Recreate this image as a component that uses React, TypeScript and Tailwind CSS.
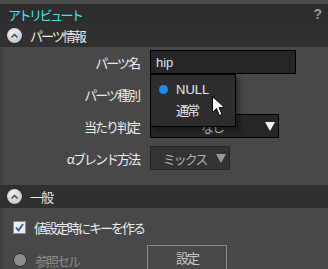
import React from 'react'

const font = "font-['Noto_Sans_CJK_JP','Noto_Sans',sans-serif]"

function CollapseIcon() {
  return (
    <span className="w-[15px] h-[15px] rounded-full bg-[radial-gradient(circle_at_40%_35%,#f4f4f4,#c9c9c9_70%,#a8a8a8)] flex items-center justify-center shadow-[0_0_1px_#000]">
      <svg width="9" height="6" viewBox="0 0 9 6">
        <path d="M1.5 4.5 L4.5 1.5 L7.5 4.5" fill="none" stroke="#245a8c" strokeWidth="1.6" />
      </svg>
    </span>
  )
}

function SectionHeader({ title }: { title: string }) {
  return (
    <div className="h-[23px] bg-[#303030] flex items-center pl-[7px] gap-[8px]">
      <CollapseIcon />
      <span className="text-[#ececec] tracking-[-2px]">{title}</span>
    </div>
  )
}

function Label({ text }: { text: string }) {
  return <div className="w-[138px] text-right text-[#ececec] tracking-[-2px] pr-[2px]">{text}</div>
}

function Triangle({ color }: { color: string }) {
  return (
    <svg width="10" height="9" viewBox="0 0 10 9">
      <path d="M0 0 L10 0 L5 9 Z" fill={color} />
    </svg>
  )
}

export default function App() {
  return (
    <div className={`w-[328px] h-[269px] overflow-hidden bg-[#484848] text-[13px] leading-none ${font}`}>
      <div className="h-[4px] bg-[#4b4b4b]" />
      <div className="h-[20px] bg-[#2d2d2d] flex items-center justify-between pl-[8px] pr-[6px]">
        <span className="text-[#45e6ef] tracking-[-2.5px] text-[13px]">アトリビュート</span>
        <span className="text-[#9a9a9a] font-bold text-[14px] font-['Liberation_Sans']">?</span>
      </div>

      <SectionHeader title="パーツ情報" />

      <div className="border-l-[3px] border-[#3e3e3e] pt-[3px] pb-[15px] flex flex-col gap-[8px]">
        <div className="flex items-center gap-[9px] relative">
          <Label text="パーツ名" />
          <div className="w-[146px] h-[24px] bg-[#262626] border border-black flex items-center pl-[5px] text-[#dce6f0] font-['Liberation_Sans'] text-[13px] relative">
            hip
            <div className="absolute left-[-1px] top-[23px] w-[86px] h-[53px] bg-[#2d2d2d] border border-black shadow-[4px_4px_4px_rgba(0,0,0,0.35)] z-10 flex flex-col pt-[8px] gap-[8px]">
              <div className="flex items-center h-[12px]">
                <span className="w-[9px] h-[9px] rounded-full bg-[#1a8ef0] ml-[8px] mr-[8px]" />
                <span className="text-[#e0e8f0] font-['Liberation_Sans'] text-[13px]">NULL</span>
              </div>
              <div className="flex items-center h-[12px] pl-[25px]">
                <span className={`text-[#e6e6e6] text-[13px] tracking-[-2px] ${font}`}>通常</span>
              </div>
            </div>
            <svg className="absolute left-[61px] top-[45px] z-20" width="13" height="21" viewBox="0 0 13 21">
              <path d="M0.5 0.5 L0.5 16.5 L4.5 12.5 L7.5 19.5 L10 18.5 L7 11.5 L12.5 11.5 Z" fill="#fff" stroke="#000" strokeWidth="1" />
            </svg>
          </div>
        </div>

        <div className="flex items-center gap-[9px] h-[24px]">
          <Label text="パーツ種別" />
          <div className="w-[84px] h-[24px] bg-[#262626] border border-black" />
        </div>

        <div className="flex items-center gap-[9px]">
          <Label text="当たり判定" />
          <div className="w-[129px] h-[24px] bg-[#262626] border border-black flex items-center pr-[3px]">
            <span className="flex-1 text-center text-[#b8c0c8] tracking-[-2px] pl-[8px]">なし</span>
            <Triangle color="#f2f2f2" />
          </div>
        </div>

        <div className="flex items-center gap-[9px]">
          <Label text="αブレンド方法" />
          <div className="w-[80px] h-[24px] bg-[#333333] border border-[#262626] flex items-center pr-[3px]">
            <span className="flex-1 text-center text-[#a9b4bf] tracking-[-2px] pl-[2px]">ミックス</span>
            <Triangle color="#9a9a9a" />
          </div>
        </div>
      </div>

      <SectionHeader title="一般" />

      <div className="border-l-[3px] border-[#3e3e3e] pl-[10px] pt-[12px] flex flex-col">
        <div className="flex items-center gap-[8px] h-[14px]">
          <span className="w-[13px] h-[13px] bg-[#eeeeee] border border-[#8a8a8a] flex items-center justify-center">
            <svg width="9" height="9" viewBox="0 0 9 9">
              <path d="M1 4.5 L3.5 7.5 L8 1" fill="none" stroke="#2b5cb4" strokeWidth="1.8" />
            </svg>
          </span>
          <span className="text-[#ececec] tracking-[-2px]">値設定時にキーを作る</span>
        </div>
        <div className="flex items-center mt-[11px] h-[24px]">
          <div className="w-[134px] flex items-center mt-[6px]">
            <span className="w-[14px] h-[14px] rounded-full bg-[#8c8c8c] border border-[#2a2a2a]" />
            <span className="text-[#8c8c8c] tracking-[-2px] ml-[8px]">参照セル</span>
          </div>
          <div className="w-[80px] h-[25px] border border-[#8c8c8c] flex items-center justify-center text-[#c8c8c8] tracking-[-2px]">設定</div>
        </div>
      </div>
    </div>
  )
}
